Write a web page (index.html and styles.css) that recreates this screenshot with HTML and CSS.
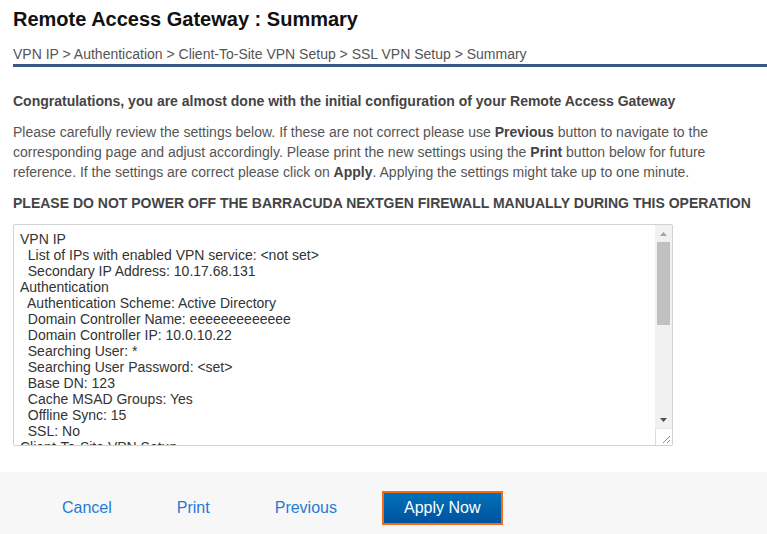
FILE: index.html
```html
<!DOCTYPE html>
<html>
<head>
<meta charset="utf-8">
<link rel="stylesheet" href="styles.css">
</head>
<body>
<div class="page">
  <div class="header">
    <h1 class="title">Remote Access Gateway : Summary</h1>
    <div class="crumbs">VPN IP &gt; Authentication &gt; Client-To-Site VPN Setup &gt; SSL VPN Setup &gt; Summary</div>
  </div>
  <div class="content">
    <p class="lead">Congratulations, you are almost done with the initial configuration of your Remote Access Gateway</p>
    <p class="text">Please carefully review the settings below. If these are not correct please use <b>Previous</b> button to navigate to the corresponding page and adjust accordingly. Please print the new settings using the <b>Print</b> button below for future reference. If the settings are correct please click on <b>Apply</b>. Applying the settings might take up to one minute.</p>
    <p class="warn">PLEASE DO NOT POWER OFF THE BARRACUDA NEXTGEN FIREWALL MANUALLY DURING THIS OPERATION</p>
    <div class="box">
      <textarea class="summary" readonly>VPN IP
  List of IPs with enabled VPN service: &lt;not set&gt;
  Secondary IP Address: 10.17.68.131
Authentication
  Authentication Scheme: Active Directory
  Domain Controller Name: eeeeeeeeeeeee
  Domain Controller IP: 10.0.10.22
  Searching User: *
  Searching User Password: &lt;set&gt;
  Base DN: 123
  Cache MSAD Groups: Yes
  Offline Sync: 15
  SSL: No
Client-To-Site VPN Setup
  Client Network: 192.168.100.0/24
  Default Gateway: 192.168.100.254
  Client Pool: 192.168.100.10 - 192.168.100.200
  DNS Server: 10.0.10.22
  DNS Suffix: example.local
  Accessible Networks: 10.0.10.0/24
  VPN Group Policy: Default
SSL VPN Setup
  Enable SSL VPN: Yes
  Default Domain: example.local
  Listen IP: 10.17.68.131
  Web Portal: Enabled
  CudaLaunch: Enabled
  Authentication Scheme: Active Directory</textarea>
      <div class="sbar">
        <div class="sb-btn">
          <svg width="7" height="4" viewBox="0 0 7 4"><polygon points="3.5,0 7,4 0,4" fill="#a3a3a3"/></svg>
        </div>
        <div class="sb-track"><div class="sb-thumb"></div></div>
        <div class="sb-btn">
          <svg width="7" height="4" viewBox="0 0 7 4"><polygon points="0,0 7,0 3.5,4" fill="#505050"/></svg>
        </div>
        <div class="sb-corner">
          <svg width="17" height="17" viewBox="0 0 17 17"><path d="M15 8 L8 15 M15 12 L12 15" stroke="#8a8a8a" stroke-width="1" fill="none"/></svg>
        </div>
      </div>
    </div>
  </div>
  <div class="footer">
    <a class="btn" href="#">Cancel</a>
    <a class="btn" href="#">Print</a>
    <a class="btn" href="#">Previous</a>
    <a class="btn primary" href="#">Apply Now</a>
  </div>
</div>
</body>
</html>
```
FILE: styles.css
```css
html, body {
  margin: 0;
  padding: 0;
  background: #fff;
}
body {
  font-family: "Liberation Sans", Arial, sans-serif;
  color: #444;
  width: 767px;
  height: 534px;
  overflow: hidden;
}
.header {
  margin-left: 13px;
  border-bottom: 3px solid #3b5784;
  padding-bottom: 2px;
}
.title {
  margin: 0;
  padding-top: 8px;
  font-size: 20px;
  line-height: 23px;
  font-weight: bold;
  color: #111;
}
.crumbs {
  margin-top: 15px;
  font-size: 14px;
  line-height: 16px;
  color: #555;
}
.content {
  padding: 0 13px;
}
.lead {
  margin: 26px 0 0;
  font-size: 14px;
  line-height: 16px;
  font-weight: bold;
  color: #444;
}
.text {
  margin: 13px 0 0;
  font-size: 14px;
  line-height: 20px;
  color: #555;
  padding-right: 40px;
}
.text b {
  color: #444;
}
.warn {
  margin: 13px 0 0;
  font-size: 14px;
  line-height: 16px;
  font-weight: bold;
  color: #444;
}
.box {
  display: flex;
  margin-top: 13px;
  width: 660px;
  height: 222px;
  box-sizing: border-box;
  border: 1px solid #d2d2d2;
  border-radius: 2px;
  background: #fff;
  overflow: hidden;
}
.summary {
  flex: 1;
  display: block;
  box-sizing: border-box;
  height: 100%;
  margin: 0;
  padding: 6px 6px;
  border: 0;
  font-family: "Liberation Sans", Arial, sans-serif;
  font-size: 14px;
  line-height: 16px;
  color: #333;
  background: #fff;
  white-space: pre;
  overflow: hidden;
  outline: none;
  resize: none;
}
.sbar {
  width: 17px;
  display: flex;
  flex-direction: column;
  background: #f1f1f1;
}
.sb-btn {
  height: 17px;
  display: flex;
  align-items: center;
  justify-content: center;
}
.sb-btn svg {
  display: block;
}
.sb-track {
  flex: 1;
  padding: 0 2px;
}
.sb-thumb {
  height: 83px;
  background: #c1c1c1;
}
.sb-corner {
  height: 17px;
  background: #fff;
  box-sizing: border-box;
  border-left: 1px solid #dcdcdc;
  border-top: 1px solid #e6e6e6;
}
.sb-corner svg {
  display: block;
  margin-left: -1px;
  margin-top: -1px;
}
.footer {
  margin-top: 26px;
  height: 62px;
  box-sizing: border-box;
  background: #f7f7f7;
  display: flex;
  align-items: flex-start;
  gap: 25px;
  padding: 19px 0 0 42px;
}
.btn {
  display: inline-flex;
  align-items: center;
  height: 34px;
  box-sizing: border-box;
  padding: 0 20px;
  font-size: 16px;
  color: #1f7ad8;
  text-decoration: none;
}
.btn.primary {
  border: 2px solid #f56a12;
  background: linear-gradient(#0072ba, #00529e);
  color: #fff;
  padding: 0 21px 0 20px;
}
```
